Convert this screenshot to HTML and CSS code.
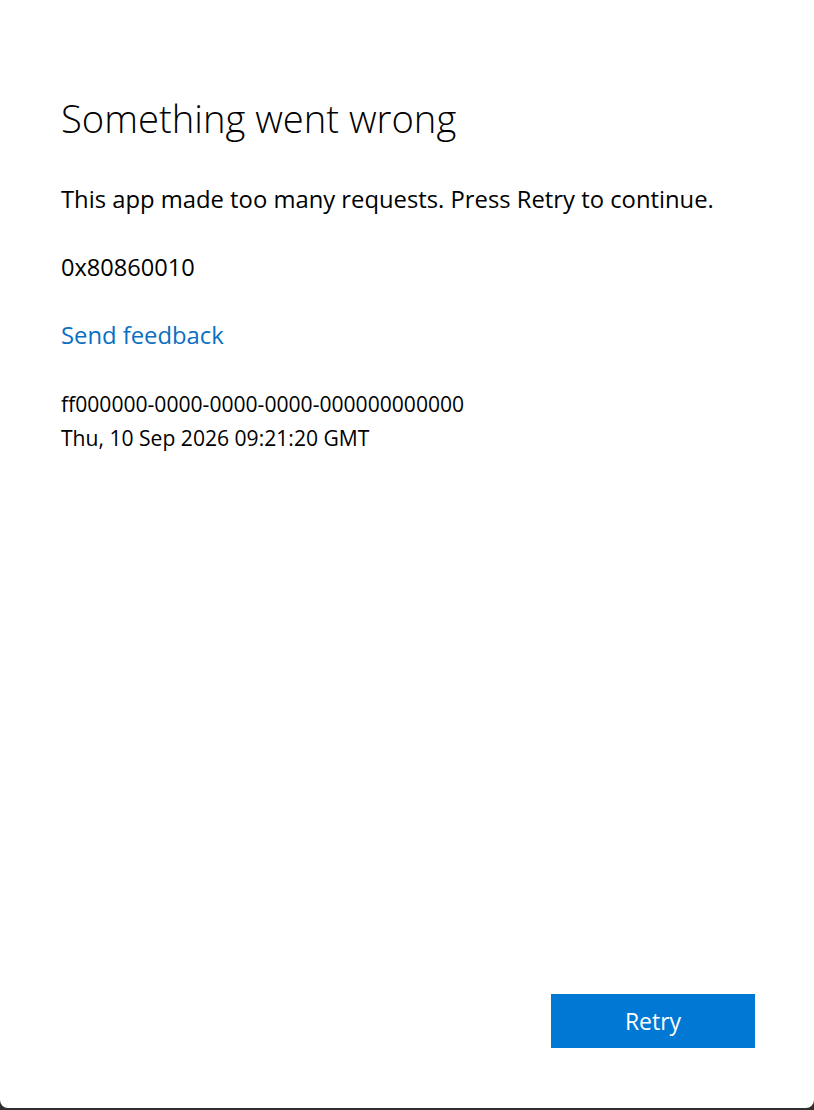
FILE: index.html
```html
<!DOCTYPE html>
<html lang="en">
<head>
<meta charset="utf-8">
<title>Something went wrong</title>
<link rel="stylesheet" href="styles.css">
</head>
<body>
<div class="panel">
  <div class="content">
    <h1 class="title">Something went wrong</h1>
    <p class="message">This app made too many requests. Press Retry to continue.</p>
    <p class="code">0x80860010</p>
    <a class="feedback" href="#">Send feedback</a>
    <div class="details">
      <div class="detail-line">ff000000-0000-0000-0000-000000000000</div>
      <div class="detail-line">Thu, 10 Sep 2026 09:21:20 GMT</div>
    </div>
  </div>
  <div class="actions">
    <button class="retry" type="button">Retry</button>
  </div>
</div>
</body>
</html>
```
FILE: styles.css
```css
html, body {
  margin: 0;
  padding: 0;
  height: 100%;
}
body {
  background: #2f2f2f;
  font-family: "Open Sans", "Noto Sans", sans-serif;
  color: #000;
}
.panel {
  box-sizing: border-box;
  height: 1108px;
  background: #fff;
  border-radius: 0 0 8px 8px;
  display: flex;
  flex-direction: column;
  justify-content: space-between;
}
.content {
  padding: 92px 0 0 61px;
  display: flex;
  flex-direction: column;
  align-items: flex-start;
}
.title {
  margin: 0;
  font-size: 38.2px;
  font-weight: 300;
  line-height: 52px;
}
.message {
  margin: 39px 0 0;
  font-size: 23.8px;
  line-height: 32px;
}
.code {
  margin: 36px 0 0;
  font-size: 23.6px;
  line-height: 32px;
}
.feedback {
  margin-top: 36px;
  font-size: 23.8px;
  line-height: 32px;
  color: #0a6fc2;
  text-decoration: none;
}
.details {
  margin-top: 36px;
  font-size: 21.1px;
  line-height: 34px;
}
.actions {
  display: flex;
  justify-content: flex-end;
  padding: 0 59px 60px 0;
}
.retry {
  width: 204px;
  height: 54px;
  border: none;
  background: #0078d4;
  color: #fff;
  font-family: "Open Sans", "Noto Sans", sans-serif;
  font-size: 23px;
  padding: 0;
}
```
